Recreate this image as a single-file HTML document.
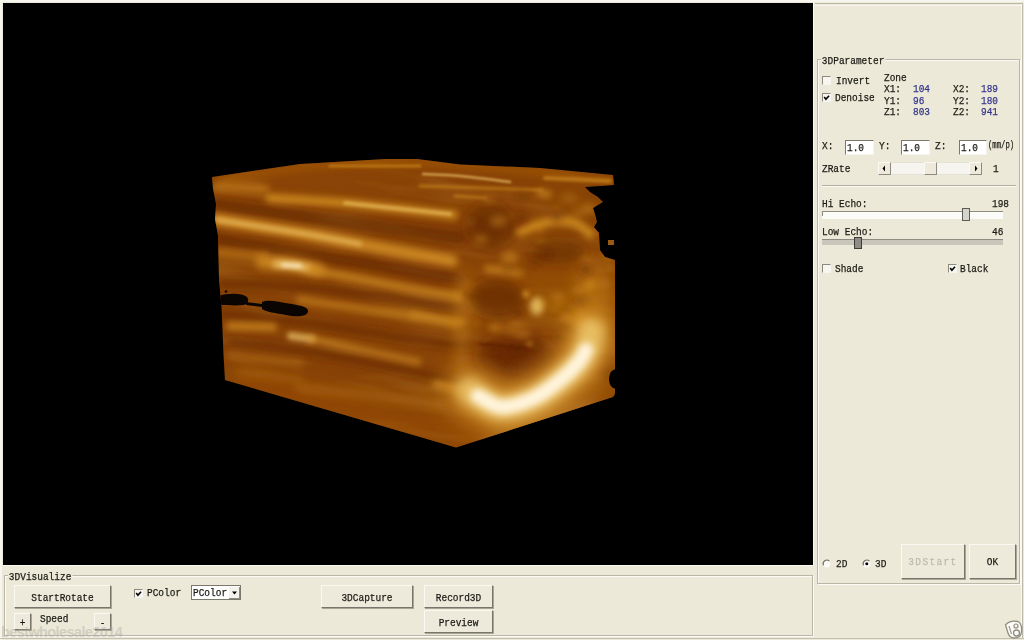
<!DOCTYPE html>
<html><head><meta charset="utf-8">
<style>
html,body{margin:0;padding:0;}
body{width:1024px;height:640px;position:relative;overflow:hidden;background:#ECE9D8;font-family:"Liberation Mono",monospace;}
.a{position:absolute;box-sizing:border-box;}
.t{position:absolute;font-family:"Liberation Mono",monospace;font-size:11px;line-height:11px;color:#1a1a14;white-space:pre;transform:scaleX(0.86);transform-origin:0 0;margin-top:-1px;-webkit-text-stroke:0.25px #1a1a14;}
.num{color:#34348c;-webkit-text-stroke:0.25px #34348c;}
.grp{position:absolute;box-sizing:border-box;border:1px solid #bab7a8;box-shadow:1px 1px 0 #fbfaf4, inset 1px 1px 0 #fbfaf4;}
.btn{position:absolute;box-sizing:border-box;background:#EDEADC;border-top:1px solid #fbfaf2;border-left:1px solid #fbfaf2;border-right:1px solid #78766a;border-bottom:1px solid #78766a;box-shadow:1px 1px 0 #a9a697;}
.btn span{position:absolute;left:0;right:0;text-align:center;font-family:"Liberation Mono",monospace;font-size:11px;line-height:11px;color:#1a1a14;white-space:pre;transform:scaleX(0.86);transform-origin:50% 0;margin-top:-1px;-webkit-text-stroke:0.25px #1a1a14;}
.sb{position:absolute;box-sizing:border-box;background:#EDEADC;border-top:1px solid #fbfaf2;border-left:1px solid #fbfaf2;border-right:1px solid #8d8b7e;border-bottom:1px solid #8d8b7e;}
.cb{position:absolute;box-sizing:border-box;width:9px;height:9px;border-top:1.5px solid #8d8a7c;border-left:1.5px solid #8d8a7c;border-right:1px solid #f6f5ef;border-bottom:1px solid #f6f5ef;background:#f7f6f1;}
.edit{position:absolute;box-sizing:border-box;background:#fff;border-top:1.5px solid #7a786c;border-left:1.5px solid #7a786c;border-right:1px solid #f4f3ee;border-bottom:1px solid #f4f3ee;}
</style></head>
<body>
<!-- outer frame -->
<div class="a" style="left:0;top:0;width:1024px;height:640px;border-top:2px solid #f6f5ee;border-left:2px solid #f6f5ee;"></div>
<!-- viewport -->
<div class="a" style="left:3px;top:3px;width:811px;height:562px;background:#000;"></div>
<div class="a" style="left:813px;top:2px;width:1px;height:564px;background:#fbfbf6;"></div>
<div class="a" style="left:3px;top:565px;width:811px;height:1px;background:#fbfbf6;"></div>

<!-- right panel border -->
<div class="a" style="left:815px;top:3px;width:208px;height:1px;background:#bcb9aa;"></div>
<div class="a" style="left:815px;top:5px;width:207px;height:1px;background:#f7f6ee;"></div>
<div class="a" style="left:1022px;top:3px;width:1px;height:636px;background:#bcb9aa;"></div>
<div class="a" style="left:1021px;top:4px;width:1px;height:634px;background:#fbfaf2;"></div>
<div class="a" style="left:0;top:638px;width:1024px;height:1px;background:#c4c1b2;"></div>

<!-- 3D block -->
<svg class="a" style="left:0;top:0" width="1024" height="640" viewBox="0 0 1024 640">
<defs><filter id="b1" filterUnits="userSpaceOnUse" x="150" y="100" width="530" height="400"><feGaussianBlur stdDeviation="1"/></filter><filter id="b1_2" filterUnits="userSpaceOnUse" x="150" y="100" width="530" height="400"><feGaussianBlur stdDeviation="1.2"/></filter><filter id="b1_5" filterUnits="userSpaceOnUse" x="150" y="100" width="530" height="400"><feGaussianBlur stdDeviation="1.5"/></filter><filter id="b1_8" filterUnits="userSpaceOnUse" x="150" y="100" width="530" height="400"><feGaussianBlur stdDeviation="1.8"/></filter><filter id="b2" filterUnits="userSpaceOnUse" x="150" y="100" width="530" height="400"><feGaussianBlur stdDeviation="2"/></filter><filter id="b2_5" filterUnits="userSpaceOnUse" x="150" y="100" width="530" height="400"><feGaussianBlur stdDeviation="2.5"/></filter><filter id="b3" filterUnits="userSpaceOnUse" x="150" y="100" width="530" height="400"><feGaussianBlur stdDeviation="3"/></filter><filter id="b3_5" filterUnits="userSpaceOnUse" x="150" y="100" width="530" height="400"><feGaussianBlur stdDeviation="3.5"/></filter><filter id="b4" filterUnits="userSpaceOnUse" x="150" y="100" width="530" height="400"><feGaussianBlur stdDeviation="4"/></filter><filter id="b6" filterUnits="userSpaceOnUse" x="150" y="100" width="530" height="400"><feGaussianBlur stdDeviation="6"/></filter><filter id="b7" filterUnits="userSpaceOnUse" x="150" y="100" width="530" height="400"><feGaussianBlur stdDeviation="7"/></filter><filter id="b8" filterUnits="userSpaceOnUse" x="150" y="100" width="530" height="400"><feGaussianBlur stdDeviation="8"/></filter><filter id="b10" filterUnits="userSpaceOnUse" x="150" y="100" width="530" height="400"><feGaussianBlur stdDeviation="10"/></filter><filter id="b11" filterUnits="userSpaceOnUse" x="150" y="100" width="530" height="400"><feGaussianBlur stdDeviation="11"/></filter><filter id="b12" filterUnits="userSpaceOnUse" x="150" y="100" width="530" height="400"><feGaussianBlur stdDeviation="12"/></filter>
<filter id="nzL" filterUnits="userSpaceOnUse" x="150" y="100" width="530" height="400"><feTurbulence type="fractalNoise" baseFrequency="0.008 0.045" numOctaves="3" seed="7"/><feColorMatrix type="matrix" values="0 0 0 0 0.78  0 0 0 0 0.48  0 0 0 0 0.1  2.2 0 0 0 -1.05"/></filter>
<filter id="nzD" filterUnits="userSpaceOnUse" x="150" y="100" width="530" height="400"><feTurbulence type="fractalNoise" baseFrequency="0.01 0.04" numOctaves="3" seed="21"/><feColorMatrix type="matrix" values="0 0 0 0 0.3  0 0 0 0 0.1  0 0 0 0 0.0  2.2 0 0 0 -1.05"/></filter>
<clipPath id="cp"><polygon points="212,177 300,164 386,159 417,159 460,164.5 540,168 613,175 614,185 600,186 585,187 590,192 598,197 603,202 593,208 595,214 597,222 594,227 599,233 600,250 605,257 615,260 615,394 613,397 456,447.5 225,380 223.5,355 221.6,308 219,280 218,236 215,219 216,204 213,189"/></clipPath>
<linearGradient id="base" x1="0" y1="0" x2="1" y2="1">
<stop offset="0" stop-color="#8c4406"/><stop offset="0.5" stop-color="#884206"/><stop offset="1" stop-color="#8e4a08"/></linearGradient>
</defs>
<g clip-path="url(#cp)">
<rect x="200" y="150" width="430" height="310" fill="url(#base)"/>
<g transform="rotate(7 400 300)"><rect x="150" y="100" width="530" height="400" filter="url(#nzD)" opacity="0.35"/><rect x="150" y="100" width="530" height="400" filter="url(#nzL)" opacity="0.2"/></g>
<path d="M250,390 C266.7,394.2 316.7,408.0 350,415 C383.3,422.0 408.3,433.7 450,432 C491.7,430.3 575.0,409.5 600,405" stroke="#9c4c06" stroke-width="40" stroke-opacity="0.4" fill="none" stroke-linecap="round" filter="url(#b10)"/>
<path d="M480,300 C493.3,298.3 540.0,290.0 560,290 C580.0,290.0 593.3,298.3 600,300" stroke="#aa5e08" stroke-width="50" stroke-opacity="0.35" fill="none" stroke-linecap="round" filter="url(#b12)"/>
<path d="M225,178 C240.8,176.0 287.5,168.5 320,166 C352.5,163.5 383.3,162.0 420,163 C456.7,164.0 508.3,169.2 540,172 C571.7,174.8 598.3,178.7 610,180" stroke="#aa5e08" stroke-width="7" stroke-opacity="0.5" fill="none" stroke-linecap="round" filter="url(#b3)"/>
<path d="M423,174 C429.2,174.3 445.5,174.7 460,176 C474.5,177.3 501.7,181.0 510,182" stroke="#ecc468" stroke-width="2.5" stroke-opacity="0.7" fill="none" stroke-linecap="round" filter="url(#b1)"/>
<path d="M330,166 L420,166" stroke="#d08c22" stroke-width="3" stroke-opacity="0.6" fill="none" stroke-linecap="round" filter="url(#b1_2)"/>
<path d="M420,186 L542,190" stroke="#d08c22" stroke-width="3" stroke-opacity="0.6" fill="none" stroke-linecap="round" filter="url(#b1_5)"/>
<path d="M455,196 L486,198" stroke="#d08c22" stroke-width="3" stroke-opacity="0.6" fill="none" stroke-linecap="round" filter="url(#b1_5)"/>
<path d="M545,178 L610,181" stroke="#d08c22" stroke-width="4" stroke-opacity="0.7" fill="none" stroke-linecap="round" filter="url(#b1_5)"/>
<path d="M215,205 C229.2,206.8 259.2,210.5 300,216 C340.8,221.5 433.3,234.3 460,238" stroke="#581e00" stroke-width="12" stroke-opacity="0.55" fill="none" stroke-linecap="round" filter="url(#b4)"/>
<path d="M215,239 C229.2,241.3 259.2,246.3 300,253 C340.8,259.7 433.3,274.7 460,279" stroke="#581e00" stroke-width="11" stroke-opacity="0.6" fill="none" stroke-linecap="round" filter="url(#b4)"/>
<path d="M222,284 C235.0,284.5 260.3,283.2 300,287 C339.7,290.8 433.3,303.7 460,307" stroke="#581e00" stroke-width="9" stroke-opacity="0.5" fill="none" stroke-linecap="round" filter="url(#b4)"/>
<path d="M222,314 C235.0,315.3 269.5,318.0 300,322 C330.5,326.0 376.7,334.0 405,338 C433.3,342.0 459.2,344.7 470,346" stroke="#581e00" stroke-width="9" stroke-opacity="0.5" fill="none" stroke-linecap="round" filter="url(#b4)"/>
<path d="M230,342 C242.3,343.5 276.8,346.8 304,351 C331.2,355.2 365.3,361.3 393,367 C420.7,372.7 457.2,382.0 470,385" stroke="#581e00" stroke-width="9" stroke-opacity="0.5" fill="none" stroke-linecap="round" filter="url(#b4)"/>
<path d="M217,186 L265,189" stroke="#d08c22" stroke-width="9" stroke-opacity="0.6" fill="none" stroke-linecap="round" filter="url(#b3_5)"/>
<path d="M270,198 C282.5,198.8 314.3,200.2 345,203 C375.7,205.8 435.8,213.0 454,215" stroke="#d08c22" stroke-width="9" stroke-opacity="0.85" fill="none" stroke-linecap="round" filter="url(#b3)"/>
<path d="M345,203 L450,214" stroke="#ecc468" stroke-width="4" stroke-opacity="0.6" fill="none" stroke-linecap="round" filter="url(#b1_8)"/>
<path d="M215,219 C229.2,221.3 272.3,228.2 300,233 C327.7,237.8 355.7,243.3 381,248 C406.3,252.7 440.2,258.8 452,261" stroke="#d08c22" stroke-width="12" stroke-opacity="0.9" fill="none" stroke-linecap="round" filter="url(#b3_5)"/>
<path d="M218,220 C231.7,222.2 276.3,229.0 300,233 C323.7,237.0 350.0,242.2 360,244" stroke="#ecc468" stroke-width="5" stroke-opacity="0.6" fill="none" stroke-linecap="round" filter="url(#b2)"/>
<path d="M262,262 C266.7,262.3 280.7,262.7 290,264 C299.3,265.3 313.3,269.0 318,270" stroke="#d08c22" stroke-width="13" stroke-opacity="0.9" fill="none" stroke-linecap="round" filter="url(#b4)"/>
<path d="M276,264 C278.7,264.2 286.7,264.3 292,265 C297.3,265.7 305.3,267.5 308,268" stroke="#ecc468" stroke-width="7" stroke-opacity="0.95" fill="none" stroke-linecap="round" filter="url(#b3)"/>
<path d="M283,265 L300,266" stroke="#fff4dc" stroke-width="4" stroke-opacity="0.8" fill="none" stroke-linecap="round" filter="url(#b2)"/>
<path d="M217,252 L265,256" stroke="#d08c22" stroke-width="8" stroke-opacity="0.55" fill="none" stroke-linecap="round" filter="url(#b3_5)"/>
<path d="M312,270 C328.7,273.2 387.3,284.5 412,289 C436.7,293.5 452.0,295.7 460,297" stroke="#d08c22" stroke-width="9" stroke-opacity="0.7" fill="none" stroke-linecap="round" filter="url(#b3)"/>
<path d="M300,300 C313.3,301.8 353.0,307.3 380,311 C407.0,314.7 448.3,320.2 462,322" stroke="#d08c22" stroke-width="8" stroke-opacity="0.6" fill="none" stroke-linecap="round" filter="url(#b3)"/>
<path d="M230,326 L273,327" stroke="#d08c22" stroke-width="8" stroke-opacity="0.75" fill="none" stroke-linecap="round" filter="url(#b3)"/>
<path d="M291,336 L312,339" stroke="#ecc468" stroke-width="8" stroke-opacity="0.7" fill="none" stroke-linecap="round" filter="url(#b2_5)"/>
<path d="M311,339 C322.5,341.5 362.2,350.2 380,354 C397.8,357.8 411.7,360.7 418,362" stroke="#d08c22" stroke-width="7" stroke-opacity="0.65" fill="none" stroke-linecap="round" filter="url(#b3)"/>
<path d="M413,315 L456,324" stroke="#d08c22" stroke-width="8" stroke-opacity="0.5" fill="none" stroke-linecap="round" filter="url(#b3)"/>
<path d="M436,384 L459,389" stroke="#d08c22" stroke-width="7" stroke-opacity="0.7" fill="none" stroke-linecap="round" filter="url(#b3)"/>
<path d="M230,355 L300,363" stroke="#d08c22" stroke-width="7" stroke-opacity="0.4" fill="none" stroke-linecap="round" filter="url(#b3_5)"/>
<path d="M300,388 C313.3,389.3 356.7,393.3 380,396 C403.3,398.7 430.0,402.7 440,404" stroke="#d08c22" stroke-width="9" stroke-opacity="0.3" fill="none" stroke-linecap="round" filter="url(#b4)"/>
<path d="M240,372 L300,380" stroke="#d08c22" stroke-width="7" stroke-opacity="0.3" fill="none" stroke-linecap="round" filter="url(#b4)"/>
<ellipse cx="490" cy="226" rx="24" ry="22" fill="#581e00" fill-opacity="0.55" transform="rotate(0 490 226)" filter="url(#b7)"/>
<ellipse cx="558" cy="252" rx="28" ry="12" fill="#581e00" fill-opacity="0.45" transform="rotate(0 558 252)" filter="url(#b6)"/>
<ellipse cx="497" cy="298" rx="28" ry="19" fill="#581e00" fill-opacity="0.6" transform="rotate(0 497 298)" filter="url(#b6)"/>
<ellipse cx="518" cy="358" rx="40" ry="22" fill="#581e00" fill-opacity="0.7" transform="rotate(5 518 358)" filter="url(#b8)"/>
<path d="M480,344 C484.2,344.3 496.3,345.2 505,346 C513.7,346.8 527.5,348.5 532,349" stroke="#581e00" stroke-width="2.5" stroke-opacity="0.6" fill="none" stroke-linecap="round" filter="url(#b1)"/>
<path d="M520,232 C525.5,230.2 543.8,222.5 553,221 C562.2,219.5 568.8,220.8 575,223 C581.2,225.2 587.5,232.2 590,234" stroke="#d08c22" stroke-width="9" stroke-opacity="0.85" fill="none" stroke-linecap="round" filter="url(#b3)"/>
<path d="M540,193 L548,194" stroke="#d08c22" stroke-width="7" stroke-opacity="0.7" fill="none" stroke-linecap="round" filter="url(#b3)"/>
<path d="M488,269 L520,273" stroke="#d08c22" stroke-width="8" stroke-opacity="0.65" fill="none" stroke-linecap="round" filter="url(#b3)"/>
<ellipse cx="462" cy="320" rx="9" ry="55" fill="#d08c22" fill-opacity="0.35" transform="rotate(0 462 320)" filter="url(#b6)"/>
<ellipse cx="592" cy="295" rx="18" ry="40" fill="#d08c22" fill-opacity="0.35" transform="rotate(0 592 295)" filter="url(#b7)"/>
<ellipse cx="537" cy="306" rx="7" ry="9" fill="#ecc468" fill-opacity="0.85" transform="rotate(0 537 306)" filter="url(#b3)"/>
<ellipse cx="526" cy="294" rx="4" ry="4" fill="#d08c22" fill-opacity="0.7" transform="rotate(0 526 294)" filter="url(#b2)"/>
<ellipse cx="530" cy="344" rx="4" ry="3" fill="#d08c22" fill-opacity="0.6" transform="rotate(0 530 344)" filter="url(#b2)"/>
<ellipse cx="590" cy="285" rx="6" ry="6" fill="#d08c22" fill-opacity="0.6" transform="rotate(0 590 285)" filter="url(#b3)"/>
<path d="M565,318 L590,325" stroke="#d08c22" stroke-width="10" stroke-opacity="0.6" fill="none" stroke-linecap="round" filter="url(#b3)"/>
<ellipse cx="557.7" cy="297.6" rx="7.9" ry="5.3" fill="#d08c22" fill-opacity="0.44" transform="rotate(0 557.7 297.6)" filter="url(#b3_5)"/>
<ellipse cx="574.5" cy="323.7" rx="3.9" ry="2.6" fill="#d08c22" fill-opacity="0.34" transform="rotate(0 574.5 323.7)" filter="url(#b3_5)"/>
<ellipse cx="603.8" cy="284.1" rx="8.5" ry="5.7" fill="#d08c22" fill-opacity="0.27" transform="rotate(0 603.8 284.1)" filter="url(#b3_5)"/>
<ellipse cx="535.5" cy="225.8" rx="6.6" ry="4.4" fill="#d08c22" fill-opacity="0.36" transform="rotate(0 535.5 225.8)" filter="url(#b3_5)"/>
<ellipse cx="469.9" cy="221.4" rx="5.2" ry="3.5" fill="#d08c22" fill-opacity="0.43" transform="rotate(0 469.9 221.4)" filter="url(#b3_5)"/>
<ellipse cx="578.3" cy="213.1" rx="7.9" ry="5.3" fill="#d08c22" fill-opacity="0.28" transform="rotate(0 578.3 213.1)" filter="url(#b3_5)"/>
<ellipse cx="556.9" cy="208.4" rx="3.8" ry="2.5" fill="#d08c22" fill-opacity="0.42" transform="rotate(0 556.9 208.4)" filter="url(#b3_5)"/>
<ellipse cx="498.2" cy="221.2" rx="8.9" ry="5.9" fill="#d08c22" fill-opacity="0.42" transform="rotate(0 498.2 221.2)" filter="url(#b3_5)"/>
<ellipse cx="509.7" cy="329.4" rx="6.6" ry="4.4" fill="#d08c22" fill-opacity="0.39" transform="rotate(0 509.7 329.4)" filter="url(#b3_5)"/>
<ellipse cx="497.5" cy="326.4" rx="7.4" ry="4.9" fill="#d08c22" fill-opacity="0.44" transform="rotate(0 497.5 326.4)" filter="url(#b3_5)"/>
<ellipse cx="596.7" cy="233.3" rx="5.6" ry="3.8" fill="#d08c22" fill-opacity="0.28" transform="rotate(0 596.7 233.3)" filter="url(#b3_5)"/>
<ellipse cx="489.0" cy="199.4" rx="5.3" ry="3.6" fill="#d08c22" fill-opacity="0.37" transform="rotate(0 489.0 199.4)" filter="url(#b3_5)"/>
<ellipse cx="468.5" cy="288.3" rx="5.5" ry="3.7" fill="#d08c22" fill-opacity="0.31" transform="rotate(0 468.5 288.3)" filter="url(#b3_5)"/>
<ellipse cx="585.9" cy="259.7" rx="5.4" ry="3.6" fill="#d08c22" fill-opacity="0.35" transform="rotate(0 585.9 259.7)" filter="url(#b3_5)"/>
<ellipse cx="569.5" cy="198.3" rx="8.9" ry="5.9" fill="#d08c22" fill-opacity="0.25" transform="rotate(0 569.5 198.3)" filter="url(#b3_5)"/>
<ellipse cx="576.0" cy="312.5" rx="3.8" ry="2.6" fill="#d08c22" fill-opacity="0.41" transform="rotate(0 576.0 312.5)" filter="url(#b3_5)"/>
<ellipse cx="520.7" cy="273.9" rx="3.8" ry="2.5" fill="#d08c22" fill-opacity="0.26" transform="rotate(0 520.7 273.9)" filter="url(#b3_5)"/>
<ellipse cx="494.1" cy="328.5" rx="4.8" ry="3.2" fill="#d08c22" fill-opacity="0.4" transform="rotate(0 494.1 328.5)" filter="url(#b3_5)"/>
<ellipse cx="601.9" cy="326.6" rx="5.6" ry="3.7" fill="#d08c22" fill-opacity="0.32" transform="rotate(0 601.9 326.6)" filter="url(#b3_5)"/>
<ellipse cx="543.6" cy="302.5" rx="4.3" ry="2.9" fill="#d08c22" fill-opacity="0.4" transform="rotate(0 543.6 302.5)" filter="url(#b3_5)"/>
<ellipse cx="582.8" cy="314.7" rx="3.9" ry="2.6" fill="#d08c22" fill-opacity="0.44" transform="rotate(0 582.8 314.7)" filter="url(#b3_5)"/>
<ellipse cx="481.1" cy="239.4" rx="7.0" ry="4.6" fill="#d08c22" fill-opacity="0.43" transform="rotate(0 481.1 239.4)" filter="url(#b3_5)"/>
<ellipse cx="517.0" cy="324.0" rx="6.6" ry="4.4" fill="#d08c22" fill-opacity="0.31" transform="rotate(0 517.0 324.0)" filter="url(#b3_5)"/>
<ellipse cx="513.6" cy="215.7" rx="4.2" ry="2.8" fill="#d08c22" fill-opacity="0.28" transform="rotate(0 513.6 215.7)" filter="url(#b3_5)"/>
<ellipse cx="567.2" cy="334.5" rx="4.6" ry="3.1" fill="#d08c22" fill-opacity="0.26" transform="rotate(0 567.2 334.5)" filter="url(#b3_5)"/>
<ellipse cx="610.1" cy="267.4" rx="5.9" ry="3.9" fill="#d08c22" fill-opacity="0.3" transform="rotate(0 610.1 267.4)" filter="url(#b3_5)"/>
<ellipse cx="553.5" cy="309.8" rx="6.1" ry="4.1" fill="#d08c22" fill-opacity="0.33" transform="rotate(0 553.5 309.8)" filter="url(#b3_5)"/>
<ellipse cx="476.0" cy="322.8" rx="3.9" ry="2.6" fill="#d08c22" fill-opacity="0.35" transform="rotate(0 476.0 322.8)" filter="url(#b3_5)"/>
<ellipse cx="588.7" cy="208.9" rx="7.6" ry="5.1" fill="#d08c22" fill-opacity="0.44" transform="rotate(0 588.7 208.9)" filter="url(#b3_5)"/>
<ellipse cx="558.8" cy="304.3" rx="4.3" ry="2.9" fill="#d08c22" fill-opacity="0.34" transform="rotate(0 558.8 304.3)" filter="url(#b3_5)"/>
<ellipse cx="510.5" cy="255.7" rx="9.0" ry="6.0" fill="#d08c22" fill-opacity="0.42" transform="rotate(0 510.5 255.7)" filter="url(#b3_5)"/>
<ellipse cx="608.5" cy="255.8" rx="6.3" ry="4.2" fill="#d08c22" fill-opacity="0.4" transform="rotate(0 608.5 255.8)" filter="url(#b3_5)"/>
<ellipse cx="537.0" cy="232.2" rx="5.9" ry="3.9" fill="#d08c22" fill-opacity="0.28" transform="rotate(0 537.0 232.2)" filter="url(#b3_5)"/>
<ellipse cx="522.3" cy="333.3" rx="8.8" ry="5.9" fill="#d08c22" fill-opacity="0.38" transform="rotate(0 522.3 333.3)" filter="url(#b3_5)"/>
<ellipse cx="539.9" cy="239.1" rx="4.2" ry="2.8" fill="#d08c22" fill-opacity="0.3" transform="rotate(0 539.9 239.1)" filter="url(#b3_5)"/>
<ellipse cx="580.6" cy="315.8" rx="5.6" ry="3.8" fill="#d08c22" fill-opacity="0.41" transform="rotate(0 580.6 315.8)" filter="url(#b3_5)"/>
<ellipse cx="579.6" cy="290.7" rx="7.2" ry="4.8" fill="#d08c22" fill-opacity="0.4" transform="rotate(0 579.6 290.7)" filter="url(#b3_5)"/>
<ellipse cx="508.4" cy="260.4" rx="7.8" ry="5.2" fill="#d08c22" fill-opacity="0.39" transform="rotate(0 508.4 260.4)" filter="url(#b3_5)"/>
<ellipse cx="510.3" cy="369.7" rx="6.7" ry="5.6" fill="#581e00" fill-opacity="0.32" transform="rotate(0 510.3 369.7)" filter="url(#b3)"/>
<ellipse cx="469.7" cy="293.9" rx="4.8" ry="4.0" fill="#581e00" fill-opacity="0.33" transform="rotate(0 469.7 293.9)" filter="url(#b3)"/>
<ellipse cx="534.7" cy="345.2" rx="6.7" ry="5.6" fill="#581e00" fill-opacity="0.36" transform="rotate(0 534.7 345.2)" filter="url(#b3)"/>
<ellipse cx="518.1" cy="312.4" rx="7.1" ry="6.0" fill="#581e00" fill-opacity="0.37" transform="rotate(0 518.1 312.4)" filter="url(#b3)"/>
<ellipse cx="518.4" cy="350.1" rx="7.8" ry="6.5" fill="#581e00" fill-opacity="0.34" transform="rotate(0 518.4 350.1)" filter="url(#b3)"/>
<ellipse cx="608.6" cy="371.7" rx="6.1" ry="5.1" fill="#581e00" fill-opacity="0.31" transform="rotate(0 608.6 371.7)" filter="url(#b3)"/>
<ellipse cx="491.9" cy="349.0" rx="8.1" ry="6.7" fill="#581e00" fill-opacity="0.3" transform="rotate(0 491.9 349.0)" filter="url(#b3)"/>
<ellipse cx="567.6" cy="326.7" rx="7.1" ry="5.9" fill="#581e00" fill-opacity="0.23" transform="rotate(0 567.6 326.7)" filter="url(#b3)"/>
<ellipse cx="580.4" cy="300.4" rx="6.8" ry="5.7" fill="#581e00" fill-opacity="0.28" transform="rotate(0 580.4 300.4)" filter="url(#b3)"/>
<ellipse cx="557.8" cy="337.2" rx="6.7" ry="5.5" fill="#581e00" fill-opacity="0.34" transform="rotate(0 557.8 337.2)" filter="url(#b3)"/>
<ellipse cx="472.0" cy="220.4" rx="5.7" ry="4.8" fill="#581e00" fill-opacity="0.33" transform="rotate(0 472.0 220.4)" filter="url(#b3)"/>
<ellipse cx="499.5" cy="320.3" rx="6.6" ry="5.5" fill="#581e00" fill-opacity="0.21" transform="rotate(0 499.5 320.3)" filter="url(#b3)"/>
<ellipse cx="535.9" cy="233.0" rx="3.9" ry="3.2" fill="#581e00" fill-opacity="0.23" transform="rotate(0 535.9 233.0)" filter="url(#b3)"/>
<ellipse cx="513.7" cy="224.5" rx="4.5" ry="3.8" fill="#581e00" fill-opacity="0.21" transform="rotate(0 513.7 224.5)" filter="url(#b3)"/>
<ellipse cx="535.0" cy="262.3" rx="6.5" ry="5.4" fill="#581e00" fill-opacity="0.32" transform="rotate(0 535.0 262.3)" filter="url(#b3)"/>
<ellipse cx="502.2" cy="361.6" rx="3.6" ry="3.0" fill="#581e00" fill-opacity="0.28" transform="rotate(0 502.2 361.6)" filter="url(#b3)"/>
<ellipse cx="508.1" cy="267.9" rx="4.2" ry="3.5" fill="#581e00" fill-opacity="0.37" transform="rotate(0 508.1 267.9)" filter="url(#b3)"/>
<ellipse cx="521.8" cy="196.9" rx="6.5" ry="5.5" fill="#581e00" fill-opacity="0.22" transform="rotate(0 521.8 196.9)" filter="url(#b3)"/>
<ellipse cx="546.5" cy="254.5" rx="6.4" ry="5.3" fill="#581e00" fill-opacity="0.39" transform="rotate(0 546.5 254.5)" filter="url(#b3)"/>
<ellipse cx="585.9" cy="269.6" rx="7.5" ry="6.3" fill="#581e00" fill-opacity="0.33" transform="rotate(0 585.9 269.6)" filter="url(#b3)"/>
<ellipse cx="521.2" cy="217.0" rx="6.5" ry="5.4" fill="#581e00" fill-opacity="0.31" transform="rotate(0 521.2 217.0)" filter="url(#b3)"/>
<ellipse cx="605.8" cy="373.9" rx="6.5" ry="5.4" fill="#581e00" fill-opacity="0.27" transform="rotate(0 605.8 373.9)" filter="url(#b3)"/>
<ellipse cx="596.7" cy="190.2" rx="4.1" ry="3.4" fill="#581e00" fill-opacity="0.31" transform="rotate(0 596.7 190.2)" filter="url(#b3)"/>
<ellipse cx="556.6" cy="216.7" rx="6.6" ry="5.5" fill="#581e00" fill-opacity="0.38" transform="rotate(0 556.6 216.7)" filter="url(#b3)"/>
<ellipse cx="522.1" cy="272.0" rx="4.7" ry="3.9" fill="#581e00" fill-opacity="0.26" transform="rotate(0 522.1 272.0)" filter="url(#b3)"/>
<ellipse cx="545" cy="425" rx="60" ry="14" fill="#b88440" fill-opacity="0.55" transform="rotate(-18 545 425)" filter="url(#b8)"/>
<path d="M470,391 C472.0,392.3 476.7,396.2 482,399 C487.3,401.8 493.3,408.0 502,408 C510.7,408.0 524.5,403.3 534,399 C543.5,394.7 551.5,388.0 559,382 C566.5,376.0 574.2,368.8 579,363 C583.8,357.2 586.0,352.2 588,347 C590.0,341.8 590.5,334.5 591,332" stroke="#d08c22" stroke-width="54" stroke-opacity="0.75" fill="none" stroke-linecap="round" filter="url(#b11)"/>
<path d="M470,391 C472.0,392.3 476.7,396.2 482,399 C487.3,401.8 493.3,408.0 502,408 C510.7,408.0 524.5,403.3 534,399 C543.5,394.7 551.5,388.0 559,382 C566.5,376.0 574.2,368.8 579,363 C583.8,357.2 586.0,352.2 588,347 C590.0,341.8 590.5,334.5 591,332" stroke="#ecc468" stroke-width="28" stroke-opacity="0.9" fill="none" stroke-linecap="round" filter="url(#b6)"/>
<path d="M478,396 C482.0,397.8 492.7,406.7 502,407 C511.3,407.3 524.5,402.3 534,398 C543.5,393.7 551.7,386.8 559,381 C566.3,375.2 573.5,368.2 578,363 C582.5,357.8 584.7,352.2 586,350" stroke="#fff4dc" stroke-width="15" stroke-opacity="1.0" fill="none" stroke-linecap="round" filter="url(#b3_5)"/>
<path d="M218,296 C228,293 242,293 247,297 C250,301 247,304 244,305 C236,306 226,305 218,305 Z" fill="#0a0502"/>
<path d="M246,302 L262,304 L262,307 L246,305 Z" fill="#0a0502"/>
<path d="M262,302 C268,299 278,302 292,304 C302,306 309,307 308,312 C306,317 296,317 286,315 C276,313 266,312 262,309 Z" fill="#0a0502"/>
<circle cx="226" cy="291.5" r="1.3" fill="#0a0502"/>
<ellipse cx="615" cy="379" rx="6" ry="9.5" fill="#000"/>

</g>
<rect x="608" y="240" width="6" height="5" fill="#9a5a14"/>
</svg>
<!-- 3DParameter group -->
<div class="grp" style="left:817px;top:59px;width:203px;height:525px;"></div>
<div class="t" style="left:821px;top:57px;background:#ECE9D8;padding:0 1px;">3DParameter</div>

<div class="cb" style="left:822px;top:76px;"></div>
<div class="t" style="left:836px;top:77px;">Invert</div>
<div class="cb" style="left:822px;top:93px;"></div>
<svg class="a" style="left:822px;top:93px" width="9" height="9"><polyline points="2.2,4 3.9,6.2 7,2.8" fill="none" stroke="#000" stroke-width="1.7"/></svg>
<div class="t" style="left:835px;top:94px;">Denoise</div>

<div class="t" style="left:884px;top:74px;">Zone</div>
<div class="t" style="left:884px;top:85px;">X1:</div>
<div class="t" style="left:884px;top:97px;">Y1:</div>
<div class="t" style="left:884px;top:108px;">Z1:</div>
<div class="t num" style="left:913px;top:85px;">104</div>
<div class="t num" style="left:913px;top:97px;">96</div>
<div class="t num" style="left:913px;top:108px;">803</div>
<div class="t" style="left:953px;top:85px;">X2:</div>
<div class="t" style="left:953px;top:97px;">Y2:</div>
<div class="t" style="left:953px;top:108px;">Z2:</div>
<div class="t num" style="left:981px;top:85px;">189</div>
<div class="t num" style="left:981px;top:97px;">180</div>
<div class="t num" style="left:981px;top:108px;">941</div>

<div class="t" style="left:822px;top:142px;">X:</div>
<div class="edit" style="left:845px;top:140px;width:29px;height:15px;"></div>
<div class="t" style="left:847px;top:144px;">1.0</div>
<div class="t" style="left:879px;top:142px;">Y:</div>
<div class="edit" style="left:901px;top:140px;width:29px;height:15px;"></div>
<div class="t" style="left:903px;top:144px;">1.0</div>
<div class="t" style="left:935px;top:142px;">Z:</div>
<div class="edit" style="left:959px;top:140px;width:28px;height:15px;"></div>
<div class="t" style="left:961px;top:144px;">1.0</div>
<div class="t" style="left:988px;top:141px;transform:scaleX(0.66);">(mm/p)</div>

<div class="t" style="left:822px;top:165px;">ZRate</div>
<div class="a" style="left:878px;top:162px;width:104px;height:13px;background:#f5f4ee;border:1px solid #e4e2d6;"></div>
<div class="sb" style="left:878px;top:162px;width:13px;height:13px;"></div>
<svg class="a" style="left:878px;top:162px" width="13" height="13"><polygon points="7,3.5 4.5,6.5 7,9.5" fill="#000"/></svg>
<div class="sb" style="left:924px;top:162px;width:13px;height:13px;"></div>
<div class="sb" style="left:969px;top:162px;width:13px;height:13px;"></div>
<svg class="a" style="left:969px;top:162px" width="13" height="13"><polygon points="6,3.5 8.5,6.5 6,9.5" fill="#000"/></svg>
<div class="t" style="left:993px;top:165px;">1</div>

<div class="a" style="left:822px;top:185px;width:194px;height:1px;background:#b3b0a2;box-shadow:0 1px 0 #fbfaf4;"></div>

<div class="t" style="left:822px;top:200px;">Hi Echo:</div>
<div class="t" style="left:992px;top:200px;">198</div>
<div class="a" style="left:822px;top:211px;width:181px;height:8px;background:#fbfbf8;border-top:1.5px solid #8d8b80;"></div>
<div class="a" style="left:822px;top:211px;width:1px;height:5px;background:#8d8b80;"></div>
<div class="a" style="left:962px;top:208px;width:8px;height:13px;background:#d4d3cc;border:1px solid #5c5b55;"></div>

<div class="t" style="left:822px;top:228px;">Low Echo:</div>
<div class="t" style="left:992px;top:228px;">46</div>
<div class="a" style="left:822px;top:239px;width:181px;height:6px;background:#c9c7bc;border-top:1.5px solid #8d8b80;"></div>
<div class="a" style="left:854px;top:237px;width:8px;height:12px;background:#8d8c86;border:1px solid #3c3b38;"></div>

<div class="cb" style="left:822px;top:264px;"></div>
<div class="t" style="left:835px;top:265px;">Shade</div>
<div class="cb" style="left:948px;top:264px;"></div>
<svg class="a" style="left:948px;top:264px" width="9" height="9"><polyline points="2.2,4 3.9,6.2 7,2.8" fill="none" stroke="#000" stroke-width="1.7"/></svg>
<div class="t" style="left:960px;top:265px;">Black</div>

<svg class="a" style="left:822px;top:559px" width="10" height="10"><circle cx="4.8" cy="4.8" r="3.6" fill="#fbfaf6"/><path d="M1.6,6.3 A3.6,3.6 0 0 1 7.4,2.2" fill="none" stroke="#6f6d62" stroke-width="1.2"/></svg>
<div class="t" style="left:836px;top:560px;">2D</div>
<svg class="a" style="left:862px;top:559px" width="10" height="10"><circle cx="4.8" cy="4.8" r="3.6" fill="#fbfaf6"/><path d="M1.6,6.3 A3.6,3.6 0 0 1 7.4,2.2" fill="none" stroke="#6f6d62" stroke-width="1.2"/><circle cx="4.8" cy="4.8" r="1.5" fill="#000"/></svg>
<div class="t" style="left:875px;top:560px;">3D</div>
<div class="btn" style="left:901px;top:544px;width:64px;height:35px;"><span style="top:13px;color:#bcb9ac;-webkit-text-stroke:0.25px #bcb9ac;letter-spacing:1.6px;">3DStart</span></div>
<div class="btn" style="left:969px;top:544px;width:47px;height:35px;"><span style="top:13px;">OK</span></div>

<!-- 3DVisualize group -->
<div class="grp" style="left:4px;top:575px;width:809px;height:61px;"></div>
<div class="t" style="left:8px;top:573px;background:#ECE9D8;padding:0 1px;">3DVisualize</div>
<div class="btn" style="left:14px;top:585px;width:97px;height:23px;"><span style="top:8px;">StartRotate</span></div>
<div class="btn" style="left:14px;top:613px;width:17px;height:17px;"><span style="top:5px;">+</span></div>
<div class="t" style="left:40px;top:615px;">Speed</div>
<div class="btn" style="left:94px;top:613px;width:17px;height:17px;"><span style="top:5px;">-</span></div>
<div class="cb" style="left:134px;top:589px;"></div>
<svg class="a" style="left:134px;top:589px" width="9" height="9"><polyline points="2.2,4 3.9,6.2 7,2.8" fill="none" stroke="#000" stroke-width="1.7"/></svg>
<div class="t" style="left:147px;top:589px;">PColor</div>
<div class="edit" style="left:191px;top:585px;width:50px;height:15px;border-right:1.5px solid #7a786c;border-bottom:1.5px solid #7a786c;"></div>
<div class="t" style="left:193px;top:589px;">PColor</div>
<div class="a" style="left:229px;top:587px;width:11px;height:12px;background:#f3f2ec;border-right:1px solid #8d8b7e;border-bottom:1px solid #8d8b7e;"></div>
<svg class="a" style="left:229px;top:587px" width="11" height="12"><polygon points="3,4.5 8,4.5 5.5,7.5" fill="#000"/></svg>

<div class="btn" style="left:321px;top:585px;width:92px;height:23px;"><span style="top:8px;">3DCapture</span></div>
<div class="btn" style="left:424px;top:585px;width:69px;height:23px;"><span style="top:8px;">Record3D</span></div>
<div class="btn" style="left:424px;top:610px;width:69px;height:23px;"><span style="top:8px;">Preview</span></div>

<!-- watermark -->
<div class="a" style="left:1px;top:624px;font-family:'Liberation Sans',sans-serif;font-weight:bold;font-size:14.5px;line-height:16px;color:rgba(170,168,158,0.42);letter-spacing:-0.6px;white-space:pre;">bestwholesale2014</div>
<svg class="a" style="left:1004px;top:620px" width="19" height="19"><path d="M1.5,5 C4,2 9,0.5 14,1.5 C17,3 18,7 17.5,12 C17,16 14,18 10,18 C7,18 5,16 4,13 Z" fill="#fbfaf4" stroke="#8f8d80" stroke-width="1.3"/><path d="M5,6 L7.5,14" stroke="#9a988b" stroke-width="1.2"/><circle cx="12" cy="6" r="2" fill="none" stroke="#8f8d80" stroke-width="1.2"/><circle cx="12.5" cy="13" r="3" fill="none" stroke="#8f8d80" stroke-width="1.3"/></svg>

</body></html>
